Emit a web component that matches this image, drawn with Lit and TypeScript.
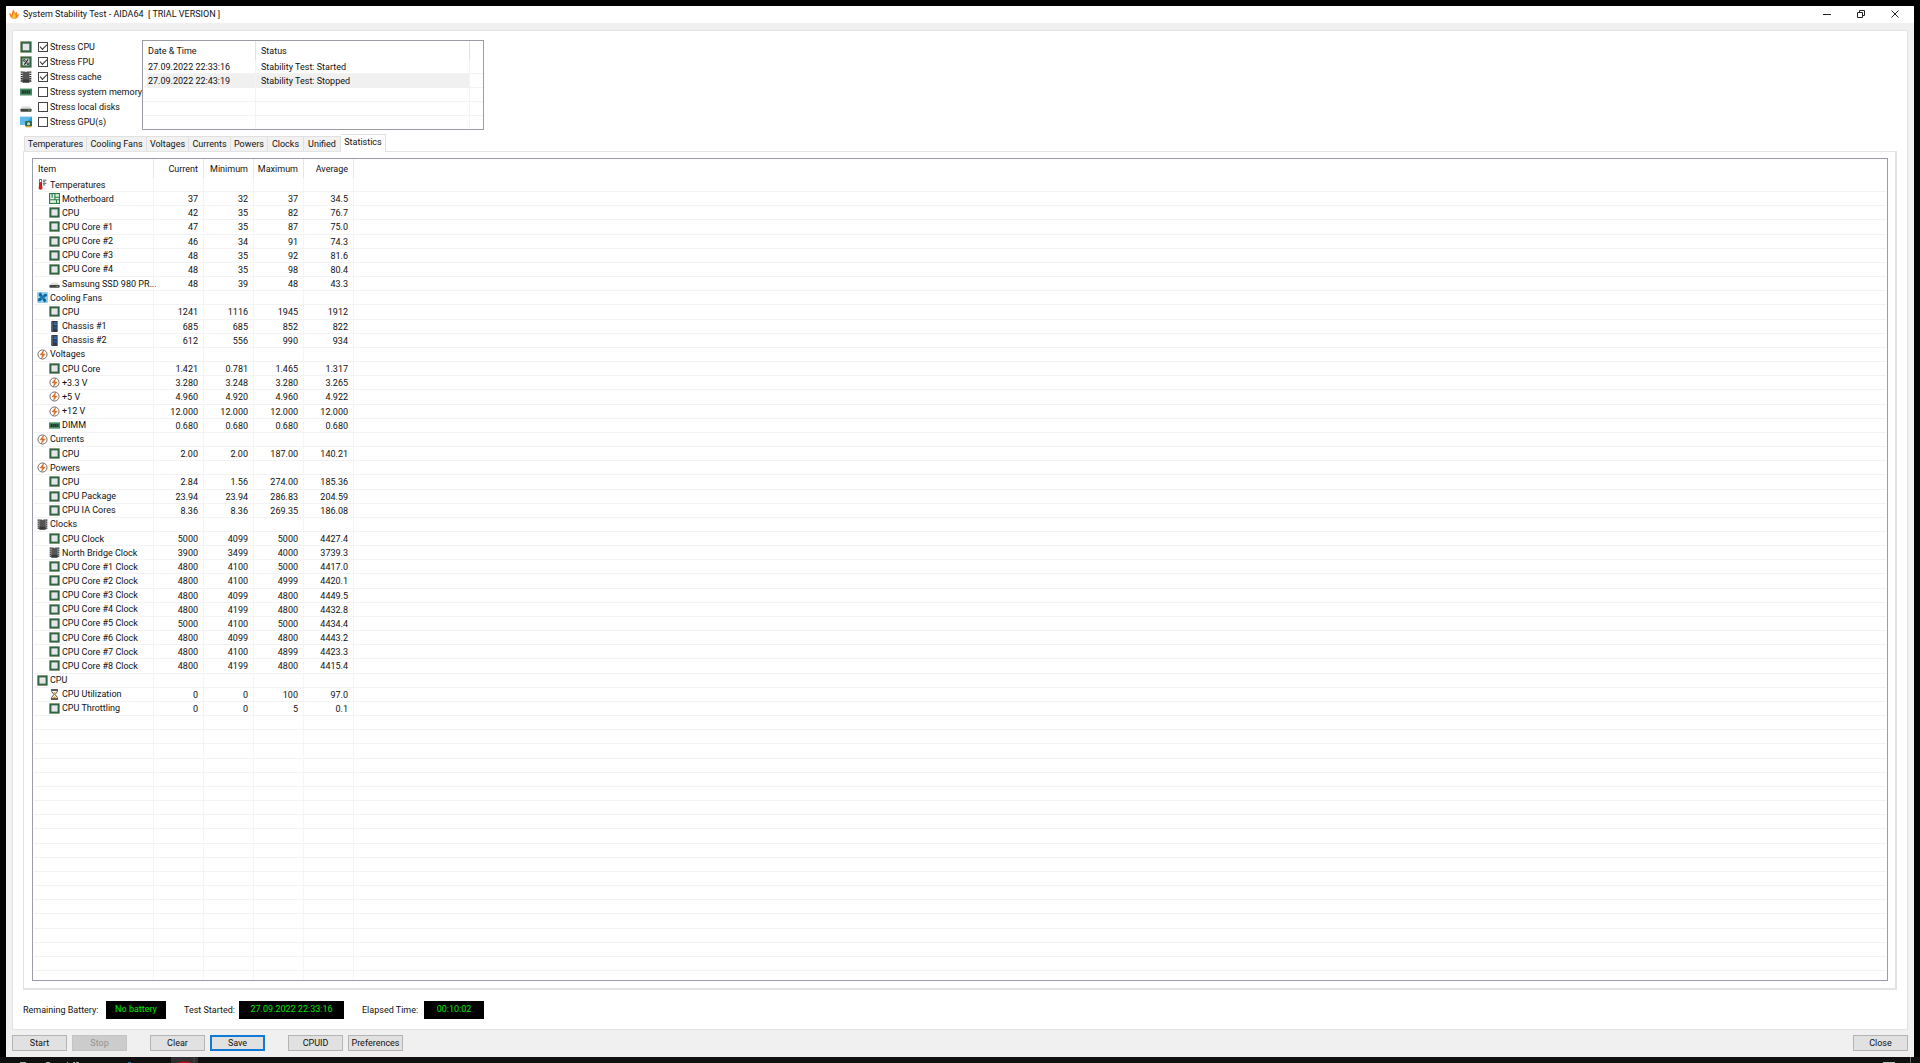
import { LitElement, html, css, svg, nothing } from "lit";
import { customElement, property } from "lit/decorators.js";

type Row = [level: number, icon: string, name: string, ...values: string[]];

const ROWS: Row[] = [
  [0, "thermo", "Temperatures"],
  [1, "board", "Motherboard", "37", "32", "37", "34.5"],
  [1, "cpu", "CPU", "42", "35", "82", "76.7"],
  [1, "cpu", "CPU Core #1", "47", "35", "87", "75.0"],
  [1, "cpu", "CPU Core #2", "46", "34", "91", "74.3"],
  [1, "cpu", "CPU Core #3", "48", "35", "92", "81.6"],
  [1, "cpu", "CPU Core #4", "48", "35", "98", "80.4"],
  [1, "disk", "Samsung SSD 980 PR...", "48", "39", "48", "43.3"],
  [0, "fan", "Cooling Fans"],
  [1, "cpu", "CPU", "1241", "1116", "1945", "1912"],
  [1, "chassis", "Chassis #1", "685", "685", "852", "822"],
  [1, "chassis", "Chassis #2", "612", "556", "990", "934"],
  [0, "volt", "Voltages"],
  [1, "cpu", "CPU Core", "1.421", "0.781", "1.465", "1.317"],
  [1, "volt", "+3.3 V", "3.280", "3.248", "3.280", "3.265"],
  [1, "volt", "+5 V", "4.960", "4.920", "4.960", "4.922"],
  [1, "volt", "+12 V", "12.000", "12.000", "12.000", "12.000"],
  [1, "dimm", "DIMM", "0.680", "0.680", "0.680", "0.680"],
  [0, "volt", "Currents"],
  [1, "cpu", "CPU", "2.00", "2.00", "187.00", "140.21"],
  [0, "volt", "Powers"],
  [1, "cpu", "CPU", "2.84", "1.56", "274.00", "185.36"],
  [1, "cpu", "CPU Package", "23.94", "23.94", "286.83", "204.59"],
  [1, "cpu", "CPU IA Cores", "8.36", "8.36", "269.35", "186.08"],
  [0, "chip", "Clocks"],
  [1, "cpu", "CPU Clock", "5000", "4099", "5000", "4427.4"],
  [1, "chip", "North Bridge Clock", "3900", "3499", "4000", "3739.3"],
  [1, "cpu", "CPU Core #1 Clock", "4800", "4100", "5000", "4417.0"],
  [1, "cpu", "CPU Core #2 Clock", "4800", "4100", "4999", "4420.1"],
  [1, "cpu", "CPU Core #3 Clock", "4800", "4099", "4800", "4449.5"],
  [1, "cpu", "CPU Core #4 Clock", "4800", "4199", "4800", "4432.8"],
  [1, "cpu", "CPU Core #5 Clock", "5000", "4100", "5000", "4434.4"],
  [1, "cpu", "CPU Core #6 Clock", "4800", "4099", "4800", "4443.2"],
  [1, "cpu", "CPU Core #7 Clock", "4800", "4100", "4899", "4423.3"],
  [1, "cpu", "CPU Core #8 Clock", "4800", "4199", "4800", "4415.4"],
  [0, "cpu", "CPU"],
  [1, "hourglass", "CPU Utilization", "0", "0", "100", "97.0"],
  [1, "cpu", "CPU Throttling", "0", "0", "5", "0.1"],
];

const VISIBLE_ROWS = 56;

const CPU_BODY = svg`
  <rect x=".5" y=".5" width="13" height="13" fill="#3d6b4a" stroke="#c2b27a" stroke-dasharray="1 1"/>
  <rect x="1" y="1" width="12" height="12" fill="#2f6547"/>`;

const ICONS: Record<string, unknown> = {
  cpu: svg`${CPU_BODY}<rect x="3" y="3" width="8" height="8" fill="#b9c2bb"/><rect x="3.500" y="3.500" width="7" height="7" fill="#e6e6e6"/>`,
  fpu: svg`${CPU_BODY}<rect x="3" y="3" width="8" height="8" fill="#d5ddd6"/>
    <path d="M9.500 4 5 10" stroke="#111" stroke-width="1.200"/><circle cx="5" cy="5.200" r="1.100" fill="none" stroke="#111"/><circle cx="9.300" cy="9" r="1.100" fill="none" stroke="#111"/>`,
  chip: svg`<path d="M2 .5v13M12 .5v13" stroke="#222" stroke-width="2.400" stroke-dasharray="1.600 1"/>
    <path d="M3 .5h3l1 1 1-1h3v13H3z" fill="#555"/><path d="M3 10h8v3.500H3z" fill="#383838"/>`,
  dimm: svg`<rect x="0" y="3" width="14" height="8" fill="#3f8c5e"/>
    <path d="M2 5h2.500v4H2zM5 5h2v4H5zM7.500 5h2v4h-2zM10 5h2v4h-2z" fill="#22382b"/><path d="M0 10.500h14" stroke="#93b49b" stroke-dasharray="1 1"/>`,
  disk: svg`<path d="M3 6h8l2.500 3H.5z" fill="#dedede"/><rect x=".5" y="9" width="13" height="3.500" rx="1" fill="#424542"/><rect x="9.500" y="10" width="2" height="1.200" fill="#58c05a"/>`,
  gpu: svg`<rect x="0" y="1" width="14" height="9" fill="#2f9ad6"/><path d="M0 1h14L5 10H0z" fill="#5cb9ea"/>
    <rect x="6" y="6" width="8" height="6" fill="#2f6b4a"/><circle cx="10" cy="9" r="1.800" fill="#cfd8d2"/><path d="M7 12.500h6" stroke="#e0a030" stroke-width="1.500"/>`,
  thermo: svg`<path d="M4.500 1.500v9" stroke="#333" stroke-width="3.600" stroke-linecap="round"/><path d="M4.500 1v4" stroke="#fff" stroke-width="2"/>
    <path d="M4.500 4v7" stroke="#d3221c" stroke-width="2"/><circle cx="4.500" cy="11" r="2.600" fill="#d3221c"/>
    <path d="M7.500 1.500h4.500M7.500 3.500h3M7.500 5.500h4.500M7.500 7.500h3" stroke="#333"/>`,
  board: svg`<rect x=".7" y=".7" width="12.600" height="12.600" fill="#dcefe0" stroke="#2d7d48" stroke-width="1.400"/>
    <path d="M0 8.500h14M7.500 0v8.500M4 1v5M8 5.500h5M9.500 9v4" stroke="#2d7d48" stroke-width="1.400"/>`,
  fan: svg`<rect width="14" height="14" rx="1.500" fill="#8fd0ee"/>
    <path d="M7 7C3 6 1 4 3 1.500 5 0 7 3 7 7 8 3 10 1 12.500 3 14 5 11 7 7 7 11 8 13 10 11 12.500 9 14 7 11 7 7 6 11 4 13 1.500 11 0 9 3 7 7 7z" fill="#10659c"/><circle cx="7" cy="7" r="2.600" fill="#1a7ab2"/>`,
  chassis: svg`<path d="M3 0h8v14H3z" fill="#333943"/><path d="M3 1.500 5 .5v13l-2-1z" fill="#555d69"/><path d="M6 2.500h4M6 4.500h4" stroke="#3487de" stroke-width="1.200"/><path d="M6 7h4v3H6z" fill="#1c57a4"/>`,
  volt: svg`<circle cx="7" cy="7" r="5.800" fill="#fff" stroke="#6b625c" stroke-width="1.200"/><path d="M8.500 1.500 3.800 7.500h3L5.500 12.500 10.500 6.500h-3z" fill="#e2752a" stroke="#c75a14" stroke-width=".5"/>`,
  hourglass: svg`<path d="M3.500 1.500v2L6.300 7l-2.800 3.500v2h7v-2L7.700 7l2.800-3.500v-2z" fill="#fff" stroke="#444" stroke-width="1.200"/>
    <path d="M5 4h4L7 6.500zM4 12.500 7 9l3 3.500z" fill="#e8962a"/><path d="M2.500 1h9M2.500 13h9" stroke="#333" stroke-width="1.600"/>`,
  flame: svg`<path d="M5 13.500C2 12 1.500 10 0 5.500 2 6 3 7 4 8 4 5 4.500 3 6.500.5 6.500 3 8 4 8.500 6c1-.3 1.500-1 1.500-2.500C11.500 5 11.500 6.500 11.300 8c.9-.3 1.700-.8 2.700-1.500-.5 3.500-2 6-4.500 7z" fill="#f5821f"/>
    <path d="M5.500 13.500C4 11.500 4.500 9.500 5.500 8 6 7 6.500 6 6.500 5 8.300 7 9.700 9 9.300 11c-.2 1-.7 1.800-1.300 2.500z" fill="#fdc53a"/>`,
};

@customElement("aida-icon")
export class AidaIcon extends LitElement {
  @property() name = "cpu";
  @property({ type: Number }) size = 11;

  static styles = css`
    :host {
      display: inline-flex;
      flex: none;
    }
  `;

  render() {
    return html`<svg width=${this.size} height=${this.size} viewBox="0 0 14 14" fill="none" aria-hidden="true">
      ${ICONS[this.name]}
    </svg>`;
  }
}

@customElement("app-root")
export class AppRoot extends LitElement {
  static styles = css`
    :host {
      display: block;
      background: #000;
      color: #111;
      font: 9px/12px Roboto, "Open Sans", sans-serif;
    }
    * {
      box-sizing: border-box;
    }
    .screen {
      display: flex;
      flex-direction: column;
      min-height: 100vh;
    }
    .window {
      flex: 1;
      display: flex;
      flex-direction: column;
      margin: 6px 6px 0;
      background: #f0f0f0;
    }
    .title {
      display: flex;
      align-items: center;
      height: 17px;
      padding: 0 2px 1px 3px;
      background: #fff;
    }
    h1 {
      flex: 1;
      margin: 0 0 0 4px;
      font-size: 9px;
      font-weight: 400;
      white-space: pre;
    }
    .caption {
      display: flex;
      align-items: center;
      justify-content: center;
      width: 34px;
      height: 15px;
      padding: 0;
      border: 0;
      background: none;
    }
    .panel {
      flex: 1;
      display: flex;
      flex-direction: column;
      margin: 7px 6px 5px;
      padding: 8px 10px 10px;
      background: #fff;
      border: 1px solid #e3e3e3;
    }
    .top {
      display: flex;
      gap: 4px;
      margin-left: -3px;
    }
    .checks {
      flex: none;
      width: 118px;
      min-width: 0;
      margin: 0;
      padding: 0;
      border: 0;
    }
    .check {
      display: flex;
      align-items: center;
      height: 15px;
      white-space: nowrap;
    }
    .check input {
      appearance: none;
      display: grid;
      place-items: center;
      flex: none;
      width: 10px;
      height: 10px;
      margin: 0 2px 0 6px;
      border: 1px solid #444;
      background: #fff;
    }
    .check input:checked::before {
      content: "";
      width: 6px;
      height: 3px;
      margin-bottom: 2px;
      border: solid #333;
      border-width: 0 0 1px 1px;
      transform: rotate(-45deg);
    }
    table {
      border-spacing: 0;
    }
    th,
    td {
      padding: 0;
      font-weight: 400;
      text-align: left;
      white-space: nowrap;
    }
    .log {
      width: 342px;
      height: 90px;
      margin-top: 1px;
      border: 1px solid #9a9ca6;
      overflow: hidden;
    }
    .log tr {
      display: grid;
      grid-template-columns: 113px 214px 1fr;
      height: 14px;
      border-bottom: 1px solid #f3f3f3;
      line-height: 14px;
    }
    .log table,
    .log thead,
    .log tbody {
      display: block;
    }
    .log thead tr {
      height: 19px;
      border: 0;
      line-height: 20px;
    }
    .log th,
    .log td {
      padding-left: 5px;
      border-right: 1px solid #f3f3f3;
    }
    .log th {
      border-color: #e2e2e2;
    }
    .log th:last-child,
    .log td:last-child {
      border: 0;
    }
    .log .selected td:nth-child(2) {
      background: #f0f0f0;
    }
    .log .selected td:first-child {
      background: linear-gradient(90deg, #fff 4px, #f0f0f0 4px);
    }
    .tabs {
      display: flex;
      align-items: flex-end;
      height: 17px;
      margin-top: 4px;
      padding-left: 1px;
    }
    .tab {
      height: 15px;
      padding: 0;
      border: 1px solid #e0e0e0;
      border-left: 0;
      border-bottom: 0;
      background: #f1f1f1;
      color: inherit;
      font: inherit;
      text-align: center;
      white-space: nowrap;
    }
    .tab:first-child {
      border-left: 1px solid #e0e0e0;
    }
    .tab.w63 { width: 63px; }
    .tab.w60 { width: 60px; }
    .tab.w42 { width: 42px; }
    .tab.w37 { width: 37px; }
    .tab.w36 { width: 36px; }
    .tab.w45 {
      width: 45px;
      height: 18px;
      margin-bottom: -1px;
      padding-bottom: 3px;
      background: #fff;
      z-index: 1;
    }
    .pane {
      flex: 1;
      display: flex;
      border: 1px solid #e3e3e3;
      border-right-width: 2px;
      border-bottom-width: 2px;
      padding: 6px 7px 7px 8px;
    }
    .stats {
      flex: 1;
      display: flex;
      flex-direction: column;
      padding-bottom: 9px;
      border: 1px solid #9a9ca6;
      background:
        linear-gradient(#f5f5f5, #f5f5f5) 120px 100% / 1px 10px no-repeat,
        linear-gradient(#f5f5f5, #f5f5f5) 170px 100% / 1px 10px no-repeat,
        linear-gradient(#f5f5f5, #f5f5f5) 220px 100% / 1px 10px no-repeat,
        linear-gradient(#f5f5f5, #f5f5f5) 270px 100% / 1px 10px no-repeat,
        linear-gradient(#f5f5f5, #f5f5f5) 320px 100% / 1px 10px no-repeat;
    }
    .stats thead {
      display: block;
    }
    .stats tbody {
      flex: 1;
      display: grid;
      grid-template-rows: repeat(56, minmax(14px, 1fr));
    }
    .stats tr {
      display: grid;
      grid-template-columns: 120px repeat(4, 50px) 1fr;
      align-items: stretch;
      margin: 0 1px;
      border-bottom: 1px solid #f3f3f3;
      line-height: 14px;
    }
    .stats thead tr {
      height: 19px;
      border: 0;
      line-height: 20px;
    }
    .stats th,
    .stats td {
      padding-right: 5px;
      border-right: 1px solid #f5f5f5;
      text-align: right;
    }
    .stats tbody td {
      height: 13px;
    }
    .stats thead th {
      border-color: #e6e6e6;
    }
    .stats thead th:first-child {
      padding-left: 4px;
      text-align: left;
    }
    .stats tr > :last-child {
      border: 0;
    }
    .stats .name {
      display: flex;
      align-items: center;
      gap: 2px;
      padding: 0 0 0 3px;
      text-align: left;
    }
    .stats .name.child {
      padding-left: 15px;
    }
    .status {
      display: flex;
      align-items: center;
      margin: 11px 0 0;
    }
    .status dt {
      white-space: nowrap;
    }
    .status dt:nth-of-type(1) { width: 83px; }
    .status dt:nth-of-type(2) { width: 55px; }
    .status dt:nth-of-type(3) { width: 62px; }
    .status dd {
      width: 60px;
      height: 18px;
      margin: 0 18px 0 0;
      background: #000;
      color: #00e400;
      line-height: 17px;
      text-align: center;
    }
    .status dd.wide {
      width: 105px;
    }
    .actions {
      display: flex;
      gap: 5px;
      padding: 0 6px 6px;
    }
    .actions button {
      width: 55px;
      height: 16px;
      padding: 0;
      border: 1px solid #b4b4b4;
      background: #e1e1e1;
      color: inherit;
      font: inherit;
      line-height: 14px;
    }
    .actions button:disabled {
      border-color: #c4c4c4;
      background: #cccccc;
      color: #939393;
    }
    .actions .default {
      border: 2px solid #0f7bd7;
      line-height: 12px;
    }
    .actions .group {
      margin-left: 18px;
    }
    .actions .close {
      margin-left: auto;
    }
    .taskbar {
      display: flex;
      justify-content: space-between;
      height: 6px;
      background: #101010;
    }
  `;

  private check(id: string, icon: string, text: string, on: boolean) {
    return html`<div class="check">
      <aida-icon name=${icon} size="12"></aida-icon>
      <input type="checkbox" id=${id} .checked=${on} />
      <label for=${id}>${text}</label>
    </div>`;
  }

  private row(r?: Row) {
    if (!r) return html`<tr><td></td><td></td><td></td><td></td><td></td><td></td></tr>`;
    const [level, icon, name, ...values] = r;
    return html`<tr>
      <td class="name ${level ? "child" : "group"}"><aida-icon name=${icon}></aida-icon>${name}</td>
      ${[0, 1, 2, 3].map((i) => html`<td>${values[i] ?? nothing}</td>`)}
      <td></td>
    </tr>`;
  }

  render() {
    const tabs: [string, string][] = [
      ["Temperatures", "w63"], ["Cooling Fans", "w60"], ["Voltages", "w42"], ["Currents", "w42"],
      ["Powers", "w37"], ["Clocks", "w36"], ["Unified", "w37"], ["Statistics", "w45"],
    ];
    return html`<div class="screen">
      <main class="window">
        <header class="title">
          <aida-icon name="flame" size="10"></aida-icon>
          <h1>System Stability Test - AIDA64  [ TRIAL VERSION ]</h1>
          <button class="caption" aria-label="Minimize"><svg width="8" height="8"><path d="M0 4.500h8" stroke="#222" /></svg></button>
          <button class="caption" aria-label="Restore"><svg width="8" height="8" fill="none" stroke="#222"><path d="M.5 2.500h5v5h-5zM2.500 2.500v-2h5v5h-2" /></svg></button>
          <button class="caption" aria-label="Close window"><svg width="8" height="8" stroke="#222"><path d="m.5.500 7 7m0-7-7 7" /></svg></button>
        </header>
        <section class="panel">
          <div class="top">
            <fieldset class="checks" aria-label="Stress options">
              ${this.check("s-cpu", "cpu", "Stress CPU", true)}
              ${this.check("s-fpu", "fpu", "Stress FPU", true)}
              ${this.check("s-cache", "chip", "Stress cache", true)}
              ${this.check("s-mem", "dimm", "Stress system memory", false)}
              ${this.check("s-disk", "disk", "Stress local disks", false)}
              ${this.check("s-gpu", "gpu", "Stress GPU(s)", false)}
            </fieldset>
            <div class="log">
              <table>
                <thead><tr><th>Date &amp; Time</th><th>Status</th><th></th></tr></thead>
                <tbody>
                  <tr><td>27.09.2022 22:33:16</td><td>Stability Test: Started</td><td></td></tr>
                  <tr class="selected"><td>27.09.2022 22:43:19</td><td>Stability Test: Stopped</td><td></td></tr>
                  ${[0, 1, 2].map(() => html`<tr><td></td><td></td><td></td></tr>`)}
                </tbody>
              </table>
            </div>
          </div>
          <div class="tabs" role="tablist">
            ${tabs.map(([t, w]) => html`<button class="tab ${w}" role="tab" aria-selected=${t === "Statistics"}>${t}</button>`)}
          </div>
          <div class="pane" role="tabpanel">
            <table class="stats">
              <thead><tr><th>Item</th><th>Current</th><th>Minimum</th><th>Maximum</th><th>Average</th><th></th></tr></thead>
              <tbody>${Array.from({ length: VISIBLE_ROWS }, (_, i) => this.row(ROWS[i]))}</tbody>
            </table>
          </div>
          <dl class="status">
            <dt>Remaining Battery:</dt><dd>No battery</dd>
            <dt>Test Started:</dt><dd class="wide">27.09.2022 22:33:16</dd>
            <dt>Elapsed Time:</dt><dd>00:10:02</dd>
          </dl>
        </section>
        <footer class="actions">
          <button>Start</button><button disabled>Stop</button>
          <button class="group">Clear</button><button class="default">Save</button>
          <button class="group">CPUID</button><button>Preferences</button>
          <button class="close">Close</button>
        </footer>
      </main>
      <div class="taskbar">
        <svg width="200" height="6" aria-hidden="true">
          <path d="M171 0h27v6h-27z" fill="#2e2e2e" /><path d="M194 0v6" stroke="#444" />
          <path d="M178 6c1-2 12-2 13 0z" fill="#c00d1e" />
          <path d="M20 5.500h6M46 5.500h4M67 5.500h1M73 5.500h2M76 5.500h3" stroke="#aaa" />
          <path d="M128 5.500h3" stroke="#1f6fc0" />
        </svg>
        <svg width="40" height="6" aria-hidden="true">
          <path d="M3 5.500h12" stroke="#bbb" /><path d="M30.500 0v6" stroke="#666" />
        </svg>
      </div>
    </div>`;
  }
}
